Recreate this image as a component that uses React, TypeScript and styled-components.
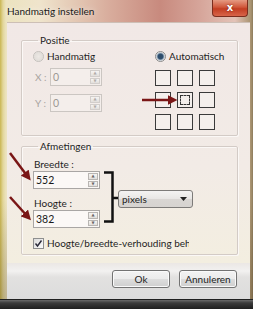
import React from 'react';
import styled, { createGlobalStyle } from 'styled-components';

const GlobalStyle = createGlobalStyle`
  html, body {
    margin: 0;
    padding: 0;
  }
  body {
    width: 253px;
    height: 309px;
    overflow: hidden;
    font-family: Lato, "Noto Sans", sans-serif;
    font-size: 10px;
    color: #1e1e1e;
  }
`;

// Window frame: Win7 glass, yellow on the left turning rose in the middle
const Window = styled.div`
  width: 253px;
  height: 309px;
  display: flex;
  flex-direction: column;
  box-sizing: border-box;
  background:
    linear-gradient(to bottom, rgba(0, 0, 0, 0) 0, rgba(0, 0, 0, 0) 200px, rgba(60, 40, 10, 0.25) 300px),
    linear-gradient(to right, #c9b652 0, #e2d69a 3px, #ece3bf 6px, #efe4cc 40px, #d8ac9c 110px, #c88a7e 160px, #d6a59a 200px, #e3c3b8 235px, #a89370 251px, #8c7b5c 253px);
`;

const TitleBar = styled.div`
  height: 22px;
  display: flex;
  align-items: flex-start;
  justify-content: space-between;
  padding-left: 7px;
  flex-shrink: 0;
`;

const Title = styled.span`
  margin-top: 5px;
  font-size: 10px;
  line-height: 13px;
  color: #1a1a1a;
  text-shadow: 0 0 6px rgba(255, 255, 255, 0.8);
`;

const CloseButton = styled.div`
  width: 36px;
  height: 17px;
  margin-right: 5px;
  box-sizing: border-box;
  border: 1px solid #7b2d1e;
  border-top: none;
  border-radius: 0 0 4px 4px;
  background: linear-gradient(to bottom, #e59a82 0, #d0573b 45%, #c23d22 55%, #d8654a 100%);
  color: #fff;
  font-family: "DejaVu Sans", sans-serif;
  font-weight: bold;
  font-size: 10px;
  line-height: 15px;
  text-align: center;
  text-shadow: 0 0 2px #6a1a0a;
`;

const Client = styled.div`
  flex: 1;
  display: flex;
  flex-direction: column;
  margin: 0 3px 0 7px;
  background: #e4e2e0;
`;

const Panel = styled.div`
  position: relative;
  height: 241px;
  box-sizing: border-box;
  padding: 11px 12px 0 14px;
  display: flex;
  flex-direction: column;
  gap: 4px;
  border-top: 1px solid #cdbfb6;
  background: linear-gradient(to bottom, #f1e8e6 0, #f2ebe6 60%, #f3eee0 100%);
`;

const GroupBox = styled.fieldset<{ $height: number }>`
  margin: 0;
  height: ${p => p.$height}px;
  box-sizing: border-box;
  padding: 2px 10px 0 11px;
  border: 1px solid #d3cbc6;
  border-radius: 2px;
  box-shadow: inset 1px 1px 0 #fbf8f6, 1px 1px 0 #fbf8f6;
  overflow: hidden;
`;

const Legend = styled.legend`
  padding: 0 2px;
  margin-left: 5px;
  font-size: 10px;
  line-height: 13px;
  color: #1e1e1e;
`;

const PositionRow = styled.div`
  display: flex;
  gap: 53px;
`;

const Column = styled.div`
  display: flex;
  flex-direction: column;
`;

const OptionRow = styled.label<{ $disabled?: boolean }>`
  display: flex;
  align-items: center;
  gap: 3px;
  height: 14px;
  color: ${p => (p.$disabled ? '#9a9a9a' : '#1e1e1e')};
`;

const Radio = styled.span<{ $checked?: boolean }>`
  width: 11px;
  height: 11px;
  box-sizing: border-box;
  border-radius: 50%;
  border: 1px solid ${p => (p.$checked ? '#8a8a8a' : '#c4c0bc')};
  background: ${p =>
    p.$checked
      ? 'radial-gradient(circle, #2d4a66 0, #2f4f70 2.5px, #9fb0c0 3.5px, #eeeeee 4.5px)'
      : 'radial-gradient(circle, #ece8e4 0, #e2deda 4px, #f4f2f0 5px)'};
`;

const FieldRow = styled.div<{ $top: number }>`
  display: flex;
  align-items: center;
  margin-top: ${p => p.$top}px;
`;

const AxisLabel = styled.span`
  width: 15px;
  margin-left: 2px;
  color: #a8a4a0;
`;

const SpinBox = styled.div<{ $width: number; $disabled?: boolean }>`
  width: ${p => p.$width}px;
  height: 18px;
  box-sizing: border-box;
  display: flex;
  border: 1px solid ${p => (p.$disabled ? '#cbc6c2' : '#a9a6a4')};
  background: ${p => (p.$disabled ? '#f4eeeb' : '#fbf8f6')};
`;

const SpinValue = styled.span<{ $disabled?: boolean }>`
  flex: 1;
  padding-left: 2px;
  font-size: 10.5px;
  line-height: 16px;
  color: ${p => (p.$disabled ? '#9c9894' : '#1a1a1a')};
`;

const SpinButtons = styled.div`
  width: 10px;
  display: flex;
  flex-direction: column;
  margin: 1px 1px 1px 0;
  gap: 1px;
`;

const SpinButton = styled.span<{ $disabled?: boolean }>`
  flex: 1;
  box-sizing: border-box;
  border: 1px solid ${p => (p.$disabled ? '#d2cecb' : '#b8b5b2')};
  background: linear-gradient(to bottom, #f6f4f2, #e2dfdc);
  display: flex;
  align-items: center;
  justify-content: center;
  color: ${p => (p.$disabled ? '#b0aca8' : '#6a6866')};
  font-family: "DejaVu Sans", sans-serif;
  font-size: 4px;
  line-height: 4px;
`;

const Grid = styled.div`
  display: grid;
  grid-template-columns: repeat(3, 16px);
  grid-auto-rows: 16px;
  gap: 6px 6px;
  margin-top: 7px;
`;

const Cell = styled.span<{ $focused?: boolean }>`
  box-sizing: border-box;
  border: 1px solid #3a3a3a;
  background: #f4efec;
  outline: ${p => (p.$focused ? '1px dashed #333' : 'none')};
  outline-offset: -4px;
`;

const DimRow = styled.div`
  display: flex;
  align-items: flex-start;
  margin-top: 2px;
`;

const FieldLabel = styled.span<{ $top?: number }>`
  margin-top: ${p => p.$top ?? 0}px;
  margin-left: 1px;
  line-height: 14px;
  height: 14px;
`;

const Bracket = styled.svg`
  margin: 14px 0 0 4px;
  flex-shrink: 0;
`;

const Dropdown = styled.div`
  width: 75px;
  height: 18px;
  margin-top: 33px;
  box-sizing: border-box;
  border: 1px solid #7d7b79;
  border-radius: 3px;
  background: linear-gradient(to bottom, #f4f3f2 0, #e8e6e4 50%, #d9d6d3 51%, #d6d3d0 100%);
  display: flex;
  align-items: center;
  justify-content: space-between;
  padding: 0 5px 0 3px;
  line-height: 14px;
`;

const CheckRow = styled.label`
  display: flex;
  align-items: center;
  gap: 3px;
  margin-top: 8px;
  height: 14px;
`;

const CheckBox = styled.span`
  width: 11px;
  height: 11px;
  box-sizing: border-box;
  border: 1px solid #8e8f8f;
  background: linear-gradient(to bottom right, #dcdcdc, #fbfbfb);
  display: flex;
`;

const CheckText = styled.span`
  width: 142px;
  overflow: hidden;
  white-space: nowrap;
`;

const ButtonBar = styled.div`
  flex: 1;
  display: flex;
  justify-content: flex-end;
  align-items: flex-start;
  gap: 9px;
  padding: 7px 13px 0 0;
  background: linear-gradient(to bottom, #ebe7e4 0, #f2f1f0 8px, #e2e1e0 14px, #dcdcdc 100%);
`;

const Button = styled.div`
  width: 58px;
  height: 18px;
  box-sizing: border-box;
  border: 1px solid #737373;
  border-radius: 3px;
  background: linear-gradient(to bottom, #f3f3f3 0, #ebebeb 50%, #dddddd 51%, #cfcfcf 100%);
  box-shadow: inset 0 0 0 1px #fafafa;
  text-align: center;
  line-height: 16px;
  color: #1e1e1e;
`;

const BottomFrame = styled.div`
  height: 9px;
  flex-shrink: 0;
  border-top: 1px solid #202020;
  background: linear-gradient(to bottom, #6a6a6a 0, #3a3a3a 3px, #1e1e1e 100%);
`;

const Annotations = styled.svg`
  position: absolute;
  left: 0;
  top: 0;
  pointer-events: none;
`;

const Spin: React.FC<{ value: string; width: number; disabled?: boolean }> = ({ value, width, disabled }) => (
  <SpinBox $width={width} $disabled={disabled}>
    <SpinValue $disabled={disabled}>{value}</SpinValue>
    <SpinButtons>
      <SpinButton $disabled={disabled}>▲</SpinButton>
      <SpinButton $disabled={disabled}>▼</SpinButton>
    </SpinButtons>
  </SpinBox>
);

const App: React.FC = () => {
  const cells = Array.from({ length: 9 }, (_, i) => i);

  return (
    <Window>
      <GlobalStyle />
      <TitleBar>
        <Title>Handmatig instellen</Title>
        <CloseButton>x</CloseButton>
      </TitleBar>
      <Client>
        <Panel>
          <GroupBox $height={102}>
            <Legend>Positie</Legend>
            <PositionRow>
              <Column>
                <OptionRow>
                  <Radio />
                  Handmatig
                </OptionRow>
                <FieldRow $top={5}>
                  <AxisLabel>X :</AxisLabel>
                  <Spin value="0" width={52} disabled />
                </FieldRow>
                <FieldRow $top={8}>
                  <AxisLabel>Y :</AxisLabel>
                  <Spin value="0" width={52} disabled />
                </FieldRow>
              </Column>
              <Column>
                <OptionRow>
                  <Radio $checked />
                  Automatisch
                </OptionRow>
                <Grid>
                  {cells.map(i => (
                    <Cell key={i} $focused={i === 4} />
                  ))}
                </Grid>
              </Column>
            </PositionRow>
          </GroupBox>

          <GroupBox $height={115}>
            <Legend>Afmetingen</Legend>
            <DimRow>
              <Column>
                <FieldLabel>Breedte :</FieldLabel>
                <Spin value="552" width={67} />
                <FieldLabel $top={7}>Hoogte :</FieldLabel>
                <Spin value="382" width={67} />
              </Column>
              <Bracket width="14" height="52" viewBox="0 0 14 52">
                <path d="M0 1.5 H8.5 V50.5 H0 M8.5 27 H14" fill="none" stroke="#111" strokeWidth="2.5" />
              </Bracket>
              <Dropdown>
                <span>pixels</span>
                <svg width="7" height="4" viewBox="0 0 7 4">
                  <path d="M0 0 H7 L3.5 4 Z" fill="#222" />
                </svg>
              </Dropdown>
            </DimRow>
            <CheckRow>
              <CheckBox>
                <svg width="9" height="9" viewBox="0 0 9 9">
                  <path d="M1.5 4.5 L3.5 7 L7.5 1.5" fill="none" stroke="#2a2a3a" strokeWidth="1.4" />
                </svg>
              </CheckBox>
              <CheckText>Hoogte/breedte-verhouding behouden</CheckText>
            </CheckRow>
          </GroupBox>

          <Annotations width="241" height="241" viewBox="0 0 241 241">
            <defs>
              <marker id="head" markerWidth="4" markerHeight="4" refX="2.2" refY="2" orient="auto" markerUnits="strokeWidth">
                <path d="M0 0 L4 2 L0 4 Z" fill="#7a1616" />
              </marker>
            </defs>
            <g stroke="#7a1616" strokeWidth="2.5" fill="none" markerEnd="url(#head)">
              <line x1="135" y1="77" x2="166" y2="77" />
              <line x1="3" y1="130" x2="21" y2="154" />
              <line x1="3" y1="174" x2="21" y2="194" />
            </g>
          </Annotations>
        </Panel>
        <ButtonBar>
          <Button>Ok</Button>
          <Button>Annuleren</Button>
        </ButtonBar>
      </Client>
      <BottomFrame />
    </Window>
  );
};

export default App;
